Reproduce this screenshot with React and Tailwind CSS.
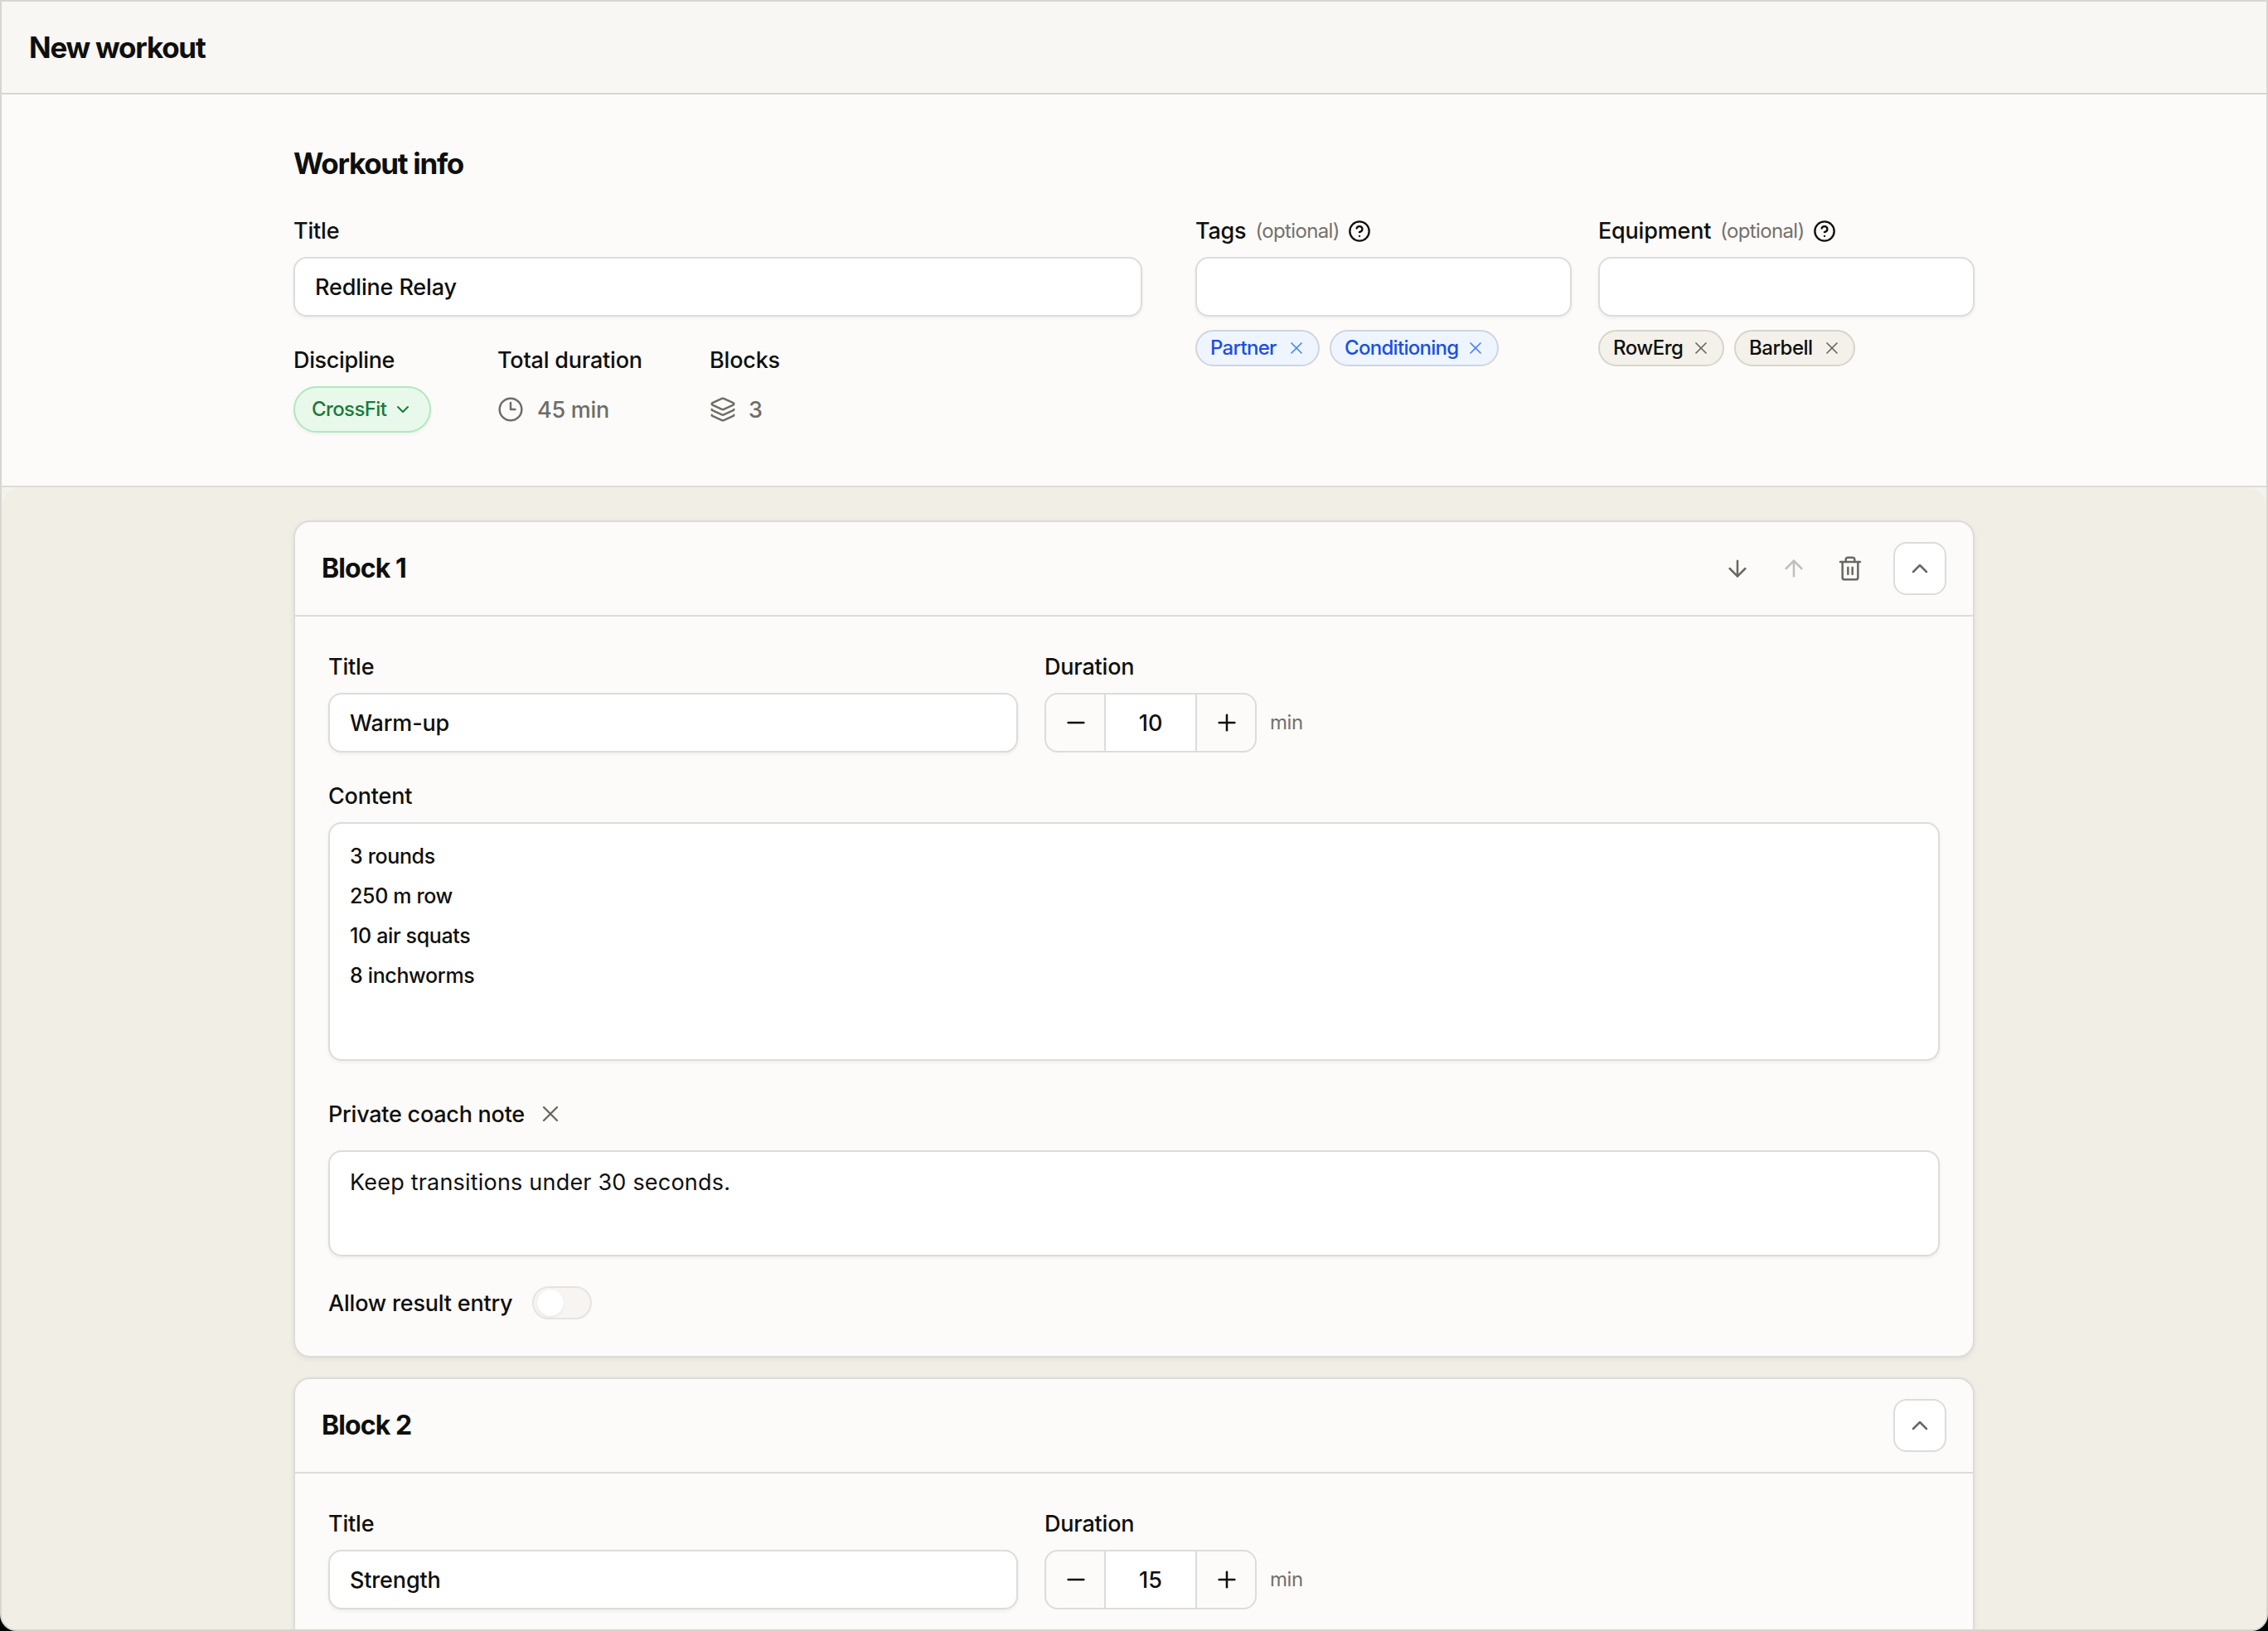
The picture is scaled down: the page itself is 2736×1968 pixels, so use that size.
import React from 'react';
import {
  ArrowDown,
  ArrowUp,
  ChevronDown,
  ChevronUp,
  CircleQuestionMark,
  Clock3,
  Layers,
  Minus,
  Plus,
  Trash2,
  X,
} from 'lucide-react';
import clsx from 'clsx';

const tags = [
  { label: 'Partner', width: 'w-[150px]' },
  { label: 'Conditioning', width: 'w-[204px]' },
];

const equipment = [
  { label: 'RowErg', width: 'w-[152px]' },
  { label: 'Barbell', width: 'w-[146px]' },
];

const blocks = [
  {
    id: 1,
    title: 'Warm-up',
    duration: 10,
    content: ['3 rounds', '250 m row', '10 air squats', '8 inchworms'],
    note: 'Keep transitions under 30 seconds.',
    movable: true,
  },
  { id: 2, title: 'Strength', duration: 15 },
];

const fieldClass = 'bg-white border-2 border-[#dcdcda] rounded-[16px] shadow-[0_2px_4px_rgba(0,0,0,0.06)]';

function Label({ children, className }) {
  return (
    <div className={clsx('flex items-center h-[40px] pt-[2px] text-[27px] font-medium tracking-[-0.2px]', className)}>
      {children}
    </div>
  );
}

function TextField({ value, className }) {
  return (
    <div className={clsx(fieldClass, 'h-[72px] flex items-center px-[24px] pt-[2px] text-[27px] font-medium tracking-[-0.15px]', className)}>
      {value}
    </div>
  );
}

function Chip({ label, width, tone }) {
  return (
    <span
      className={clsx(
        'h-[44px] flex items-center justify-between pl-[16px] pr-[14px] rounded-full border-2 text-[24px] font-medium',
        width,
        tone === 'blue'
          ? 'bg-[#eef5ff] border-[#cfd5df] text-[#1d4ee0] tracking-[-0.7px]'
          : 'bg-[#f4f1ea] border-[#d7d4ca] text-[#0f0f0e] tracking-[-0.5px]'
      )}
    >
      {label}
      <X size={24} strokeWidth={1.75} className={tone === 'blue' ? 'text-[#4f86f7]' : 'text-[#6b6862]'} />
    </span>
  );
}

function TagField({ label, chips, tone }) {
  return (
    <div className="w-[454px]">
      <Label>
        {label}
        <span className="ml-[11px] text-[24px] font-normal text-[#74716c] tracking-[-0.65px]">(optional)</span>
        <CircleQuestionMark size={28} strokeWidth={2} className="ml-[10px]" />
      </Label>
      <TextField className="mt-[12px]" />
      <div className="mt-[16px] flex gap-[12px]">
        {chips.map((chip) => (
          <Chip key={chip.label} {...chip} tone={tone} />
        ))}
      </div>
    </div>
  );
}

function Stepper({ value }) {
  return (
    <div className="flex items-center gap-[16px]">
      <div className="w-[256px] h-[72px] flex border-2 border-[#dcdcda] rounded-[16px] overflow-hidden">
        <button className="w-[70px] pl-[2px] flex items-center justify-center">
          <Minus size={32} strokeWidth={1.9} />
        </button>
        <div className="w-[112px] pt-[2px] flex items-center justify-center bg-white border-x-2 border-[#dcdcda] text-[27px] font-medium">
          {value}
        </div>
        <button className="w-[70px] pl-[2px] flex items-center justify-center">
          <Plus size={32} strokeWidth={1.9} />
        </button>
      </div>
      <span className="text-[24px] text-[#74716c] tracking-[-0.4px]">min</span>
    </div>
  );
}

function IconButton({ icon: Icon, className }) {
  return (
    <button className={clsx('size-[64px] flex items-center justify-center text-[#6b6862]', className)}>
      <Icon size={32} strokeWidth={1.9} />
    </button>
  );
}

function BlockCard({ block }) {
  return (
    <div className="w-[2028px] mx-auto shrink-0 bg-[#fcfbf9] border-2 border-[#dcdcda] rounded-[20px] shadow-[0_2px_6px_rgba(0,0,0,0.07)]">
      {/* Card header */}
      <div className="h-[114px] px-[32px] flex items-center justify-between border-b-2 border-[#dcdcda]">
        <h3 className="pb-[1px] text-[32px] font-bold tracking-[-0.9px]">Block {block.id}</h3>
        <div className="flex items-center">
          {block.movable && (
            <div className="flex gap-[4px] mr-[20px]">
              <IconButton icon={ArrowDown} />
              <IconButton icon={ArrowUp} className="opacity-40" />
              <IconButton icon={Trash2} />
            </div>
          )}
          <IconButton icon={ChevronUp} className="bg-white border-2 border-[#dcdcda] rounded-[16px]" />
        </div>
      </div>

      {/* Card body */}
      <div className="px-[40px] pt-[40px] pb-[44px]">
        <div className="flex gap-[32px]">
          <div className="w-[832px]">
            <Label>Title</Label>
            <TextField value={block.title} className="mt-[12px]" />
          </div>
          <div>
            <Label className="mb-[12px]">Duration</Label>
            <Stepper value={block.duration} />
          </div>
        </div>

        {block.content && (
          <>
            <Label className="mt-[32px]">Content</Label>
            <div className={clsx(fieldClass, 'mt-[12px] h-[288px] px-[24px] py-[15px] text-[25px] leading-[48px] font-medium tracking-[-0.35px]')}>
              {block.content.map((line) => (
                <p key={line}>{line}</p>
              ))}
            </div>
          </>
        )}

        {block.note && (
          <>
            <div className="mt-[44px] flex items-center gap-[15px]">
              <Label className="tracking-[-0.25px]">Private coach note</Label>
              <X size={32} strokeWidth={1.75} className="text-[#6b6862]" />
            </div>
            <div className={clsx(fieldClass, 'mt-[24px] h-[128px] px-[24px] pt-[15px] text-[27px] leading-[44px] tracking-[0.2px]')}>
              {block.note}
            </div>

            <div className="mt-[36px] flex items-center">
              <Label className="w-[246px]">Allow result entry</Label>
              <div className="w-[72px] h-[40px] flex items-center pl-[4px] border-2 border-[#e6e3e0] bg-[#f7f4f1] rounded-full">
                <span className="size-[32px] bg-white rounded-full shadow-[0_1px_3px_rgba(0,0,0,0.08)]" />
              </div>
            </div>
          </>
        )}
      </div>
    </div>
  );
}

export default function App() {
  return (
    <div className="w-[2736px] h-[1968px] overflow-hidden bg-black font-['Inter',sans-serif] text-[#0f0f0e]">
      <div className="h-full flex flex-col border-2 border-[#d8d6d1] rounded-b-[20px] overflow-hidden bg-[#f4f2ed]">
        <header className="h-[112px] shrink-0 flex items-center px-[33px] bg-[#f8f7f3] border-b-2 border-[#d8d6cf]">
          <h1 className="text-[35px] font-bold tracking-[-1.25px]">New workout</h1>
        </header>

        {/* Workout info */}
        <section className="h-[474px] shrink-0 bg-[#fcfbf9] border-b-2 border-[#dcdcda]">
          <div className="w-[2028px] mx-auto pt-[59px]">
            <h2 className="text-[35px] leading-[48px] font-bold tracking-[-1.3px]">Workout info</h2>
            <div className="mt-[37px] flex gap-[64px]">
              <div className="w-[1024px]">
                <Label>Title</Label>
                <TextField value="Redline Relay" className="mt-[12px]" />
                <div className="mt-[32px] flex gap-[80px]">
                  <div>
                    <Label className="tracking-[-0.35px]">Discipline</Label>
                    <button className="mt-[12px] w-[166px] h-[56px] flex items-center justify-between pl-[20px] pr-[20px] rounded-full border-2 border-[#b0e8bd] bg-[#e8f9eb] text-[#1b7a3a] text-[24px] font-medium tracking-[-0.6px] shadow-[0_2px_4px_rgba(0,0,0,0.06)]">
                      CrossFit
                      <ChevronDown size={24} strokeWidth={2} />
                    </button>
                  </div>
                  <div className="w-[176px]">
                    <Label>Total duration</Label>
                    <div className="mt-[12px] h-[56px] flex items-center gap-[16px] text-[27px] font-medium tracking-[-0.3px] text-[#6f6c67]">
                      <Clock3 size={32} strokeWidth={1.85} />
                      <span className="pt-[2px]">45 min</span>
                    </div>
                  </div>
                  <div>
                    <Label>Blocks</Label>
                    <div className="mt-[12px] h-[56px] flex items-center gap-[15px] text-[27px] font-medium text-[#6f6c67]">
                      <Layers size={32} strokeWidth={1.85} />
                      <span className="pt-[2px]">3</span>
                    </div>
                  </div>
                </div>
              </div>
              <div className="flex gap-[32px]">
                <TagField label="Tags" chips={tags} tone="blue" />
                <TagField label="Equipment" chips={equipment} tone="neutral" />
              </div>
            </div>
          </div>
        </section>

        {/* Blocks */}
        <main className="flex-1 min-h-0 overflow-hidden flex flex-col gap-[24px] pt-[40px] rounded-t-[24px] bg-[#f1eee6]">
          {blocks.map((block) => (
            <BlockCard key={block.id} block={block} />
          ))}
        </main>
      </div>
    </div>
  );
}
